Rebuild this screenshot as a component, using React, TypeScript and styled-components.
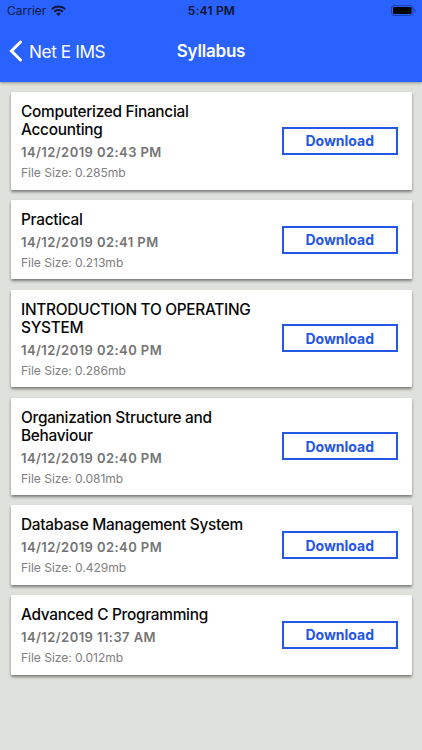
import React from "react";
import styled, { createGlobalStyle } from "styled-components";

const Global = createGlobalStyle`
  * { box-sizing: border-box; }
  body { margin: 0; background: #dfe1dc; font-family: Inter, "Liberation Sans", sans-serif; }
`;
const Screen = styled.main`
  width: 422px; height: 750px; overflow: hidden; background: #dfe1dc;
`;
const Header = styled.header`
  height: 81.6px; background: #2962ff; box-shadow: 0 1px 3px rgba(0, 0, 0, 0.35);
`;
const StatusBar = styled.div`
  height: 21px; display: grid; grid-template-columns: 1fr auto 1fr; align-items: center;
  padding: 0 6px 0 7px; font-size: 12px; color: #101a3a;
`;
const Carrier = styled.div`display: flex; align-items: center; gap: 5px;`;
const Clock = styled.div`font-weight: 600; font-size: 12px; letter-spacing: 0.2px; color: #0b1430;`;
const Battery = styled.svg`justify-self: end;`;
const NavBar = styled.nav`
  height: 60px; display: grid; grid-template-columns: 1fr auto 1fr; align-items: center;
  padding: 0 9px; color: #fff;
`;
const Back = styled.div`display: flex; align-items: center; gap: 6px; font-size: 17.2px; letter-spacing: -0.4px;`;
const Title = styled.h1`margin: 0; font-size: 17px; font-weight: 600; letter-spacing: -0.2px;`;
const List = styled.section`
  display: flex; flex-direction: column; gap: 10.2px; padding: 10.4px 10.5px;
`;
const Card = styled.article<{ $tall: boolean }>`
  height: ${(p) => (p.$tall ? 97.7 : 79.6)}px; display: flex; align-items: center;
  justify-content: space-between; background: #fff; border-radius: 1px;
  padding: 0 13.5px 0 10.5px; box-shadow: 0 2px 3px rgba(0, 0, 0, 0.45);
`;
const Details = styled.div`padding-top: 2.4px;`;
const Name = styled.h2`
  margin: 0; width: 240px; font-size: 15.4px; font-weight: 500; line-height: 18px; letter-spacing: -0.28px;
  color: #080808; white-space: pre-line;
`;
const Stamp = styled.div`
  margin-top: 4px; font-size: 13px; line-height: 18px; font-weight: 600; letter-spacing: 0.42px; color: #747474;
`;
const Size = styled.div`margin-top: 4px; font-size: 12.1px; line-height: 16px; letter-spacing: -0.05px; color: #808080;`;
const Download = styled.button`
  width: 116.5px; height: 28px; padding: 0; border: 2px solid #2457e6; background: #fff; color: #2457e6;
  font: 700 14px Inter, sans-serif; line-height: 23px;
`;

const items = [
  { name: "Computerized Financial\nAccounting", stamp: "14/12/2019 02:43 PM", size: "0.285mb" },
  { name: "Practical", stamp: "14/12/2019 02:41 PM", size: "0.213mb" },
  { name: "INTRODUCTION TO OPERATING\nSYSTEM", stamp: "14/12/2019 02:40 PM", size: "0.286mb" },
  { name: "Organization Structure and\nBehaviour", stamp: "14/12/2019 02:40 PM", size: "0.081mb" },
  { name: "Database Management System", stamp: "14/12/2019 02:40 PM", size: "0.429mb" },
  { name: "Advanced C Programming", stamp: "14/12/2019 11:37 AM", size: "0.012mb" },
];

export default function App() {
  return (
    <Screen>
      <Global />
      <Header>
        <StatusBar>
          <Carrier>
            Carrier
            <svg width="15" height="11" viewBox="0 0 15 11" fill="none" stroke="#0b1430" strokeWidth="2">
              <path d="M.8 4.2a9.6 9.6 0 0 1 13.400 0M3.200 6.700a6.200 6.200 0 0 1 8.600 0" />
              <path d="M5.200 8.600a3.300 3.300 0 0 1 4.600 0L7.500 11z" fill="#0b1430" stroke="none" />
            </svg>
          </Carrier>
          <Clock>5:41 PM</Clock>
          <Battery width="25" height="11" viewBox="0 0 25 11">
            <rect x=".5" y=".5" width="21.5" height="10" rx="2.6" fill="none" stroke="#1a3fae" />
            <rect x="2" y="2" width="18.500" height="7" rx="1.3" fill="#000" />
            <path d="M23.300 3.800v3.600q1.300-.5 1.300-1.800t-1.300-1.800" fill="#1a3fae" />
          </Battery>
        </StatusBar>
        <NavBar>
          <Back>
            <svg width="14" height="22" viewBox="0 0 14 22" fill="none" stroke="#fff" strokeWidth="3" strokeLinecap="round">
              <path d="M11.500 2 2.500 11l9 9" />
            </svg>
            Net E IMS
          </Back>
          <Title>Syllabus</Title>
        </NavBar>
      </Header>
      <List>
        {items.map((it) => (
          <Card key={it.name} $tall={it.name.includes("\n")}>
            <Details>
              <Name>{it.name}</Name>
              <Stamp>{it.stamp}</Stamp>
              <Size>File Size: {it.size}</Size>
            </Details>
            <Download>Download</Download>
          </Card>
        ))}
      </List>
    </Screen>
  );
}
